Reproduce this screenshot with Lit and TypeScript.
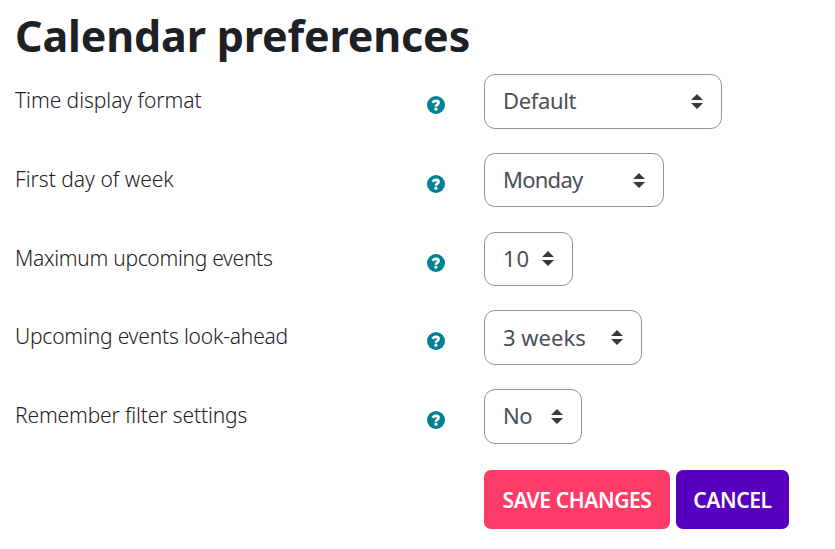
import { LitElement, html, css } from "lit";
import { customElement } from "lit/decorators.js";
import { styleMap } from "lit/directives/style-map.js";

interface Preference {
  label: string;
  value: string;
  width: number;
  labelSpacing: number;
  valueSpacing: number;
}

const PREFERENCES: Preference[] = [
  { label: "Time display format", value: "Default", width: 238, labelSpacing: -0.05, valueSpacing: -0.35 },
  { label: "First day of week", value: "Monday", width: 180, labelSpacing: 0, valueSpacing: -0.75 },
  { label: "Maximum upcoming events", value: "10", width: 89, labelSpacing: -0.3, valueSpacing: 0.8 },
  { label: "Upcoming events look-ahead", value: "3 weeks", width: 158, labelSpacing: -0.19, valueSpacing: 0 },
  { label: "Remember filter settings", value: "No", width: 98, labelSpacing: -0.14, valueSpacing: -0.5 },
];

@customElement("app-root")
export class AppRoot extends LitElement {
  static styles = css`
    :host {
      display: block;
      box-sizing: border-box;
      height: 549px;
      padding: 0 15px;
      overflow: hidden;
      background: #fff;
      color: #1d2125;
      font-family: "Noto Sans", "Open Sans", sans-serif;
    }
    .title {
      margin: 0;
      height: 74px;
      font-size: 43px;
      font-weight: 700;
      letter-spacing: -0.15px;
      line-height: 71px;
      white-space: nowrap;
    }
    .row {
      display: grid;
      grid-template-columns: 412px 57px auto;
      align-items: start;
      height: 78.75px;
    }
    .label {
      font-size: 21px;
      font-weight: 300;
      line-height: 52px;
      white-space: nowrap;
    }
    .help {
      display: block;
      width: 18px;
      height: 18px;
      margin-top: 22px;
    }
    .select {
      display: flex;
      align-items: center;
      justify-content: space-between;
      box-sizing: border-box;
      height: 54.6px;
      padding: 0 18px;
      border: 1px solid #8f959e;
      border-radius: 11px;
      color: #495057;
      font-size: 22px;
      white-space: nowrap;
    }
    .value {
      padding-bottom: 2px;
    }
    .arrows {
      flex: none;
      width: 12px;
      height: 15px;
    }
    .actions {
      display: flex;
      gap: 6px;
      margin: 2px 0 0 469px;
    }
    .button {
      box-sizing: border-box;
      height: 59px;
      padding: 2px 0 0;
      border: 0;
      border-radius: 7px;
      color: #fff;
      font: 600 21px/57px "Noto Sans", sans-serif;
      letter-spacing: -0.4px;
      white-space: nowrap;
    }
    .save {
      width: 186px;
      background: #ff3c69;
    }
    .cancel {
      width: 113px;
      background: #5800c0;
    }
  `;

  private renderRow(item: Preference) {
    return html`
      <div class="row">
        <span class="label" style=${styleMap({ letterSpacing: `${item.labelSpacing}px` })}>${item.label}</span>
        <svg class="help" viewBox="0 0 512 512" role="img" aria-label="Help">
          <circle cx="256" cy="256" r="256" fill="#008196" />
          <path
            fill="none"
            stroke="#fff"
            stroke-width="78"
            d="M160 190C186 152 216 138 256 138c46 0 74 26 74 56 0 56-76 46-76 112"
          />
          <circle cx="254" cy="376" r="46" fill="#fff" />
        </svg>
        <div class="select" role="combobox" style=${styleMap({ width: `${item.width}px` })}>
          <span class="value" style=${styleMap({ letterSpacing: `${item.valueSpacing}px` })}>${item.value}</span>
          <svg class="arrows" viewBox="0 0 12 15" aria-hidden="true">
            <path fill="#343a40" d="M0 6 6 0l6 6zM0 9h12l-6 6z" />
          </svg>
        </div>
      </div>
    `;
  }

  render() {
    return html`
      <h2 class="title">Calendar preferences</h2>
      ${PREFERENCES.map((item) => this.renderRow(item))}
      <div class="actions">
        <button class="button save">SAVE CHANGES</button>
        <button class="button cancel">CANCEL</button>
      </div>
    `;
  }
}
